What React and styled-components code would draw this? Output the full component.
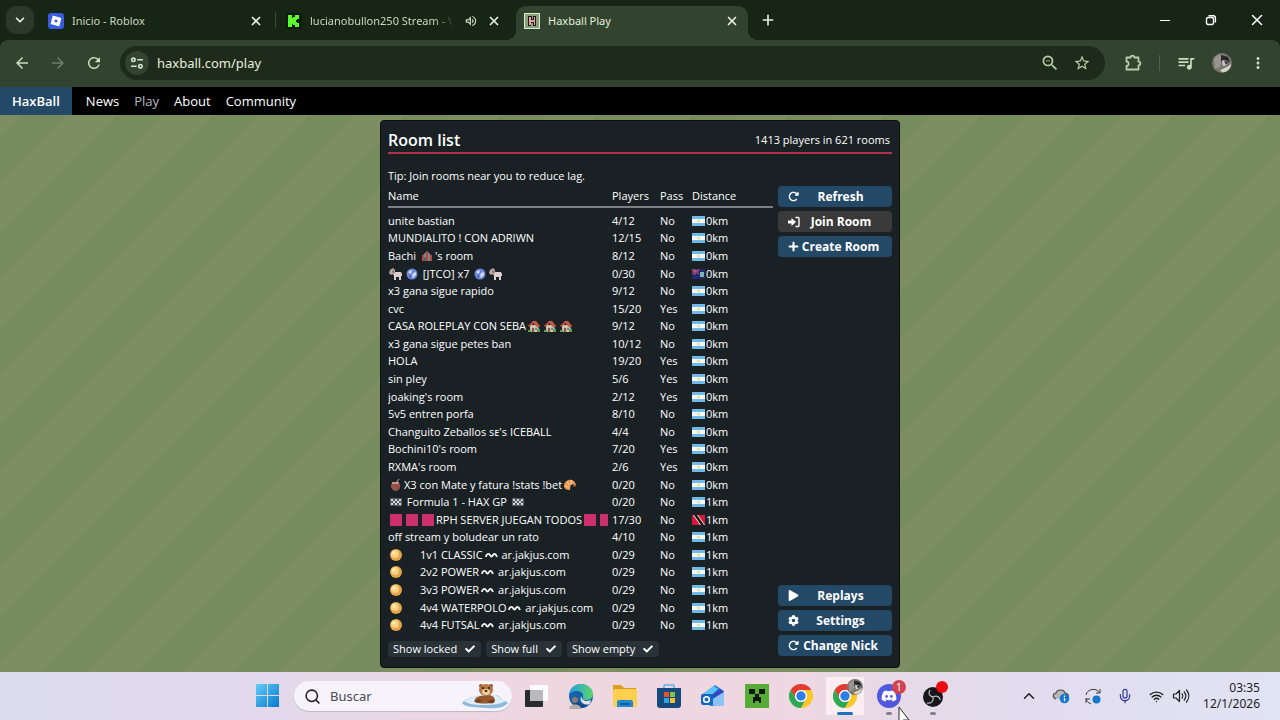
import styled, { createGlobalStyle, css } from 'styled-components';
import {
  MdArrowBack,
  MdArrowForward,
  MdMoreVert,
  MdOutlineVolumeUp,
  MdQueueMusic,
  MdRefresh,
  MdStarBorder,
  MdZoomOut,
} from 'react-icons/md';
import { FaCheck, FaCog, FaDiscord, FaPlay, FaPlus } from 'react-icons/fa';
import { FaRotateRight } from 'react-icons/fa6';
import { ChevronDown, ChevronUp, Mic, Plus, Search, Wifi, X } from 'lucide-react';

const GlobalStyle = createGlobalStyle`
  * {
    box-sizing: border-box;
  }
  body {
    margin: 0;
    font-family: 'Open Sans', 'Noto Sans', sans-serif;
    background: #172514;
  }
  button, input {
    font: inherit;
    color: inherit;
    border: 0;
    padding: 0;
    background: none;
    outline: none;
  }
  a {
    color: inherit;
    text-decoration: none;
  }
  svg {
    display: block;
    flex: none;
  }
`;

// Room data

const rooms = [
  { name: 'unite bastian', players: '4/12', pass: 'No', distance: '0km' },
  { name: 'MUNDIALITO ! CON ADRIWN', players: '12/15', pass: 'No', distance: '0km' },
  { name: 'Bachi :tent:\'s room', players: '8/12', pass: 'No', distance: '0km' },
  { name: ':ram::globe: [JTCO] x7 :globe::ram:', players: '0/30', pass: 'No', distance: '0km', flag: 'fk' },
  { name: 'x3 gana sigue rapido', players: '9/12', pass: 'No', distance: '0km' },
  { name: 'cvc', players: '15/20', pass: 'Yes', distance: '0km' },
  { name: 'CASA ROLEPLAY CON SEBA:house::house::house:', players: '9/12', pass: 'No', distance: '0km' },
  { name: 'x3 gana sigue petes ban', players: '10/12', pass: 'No', distance: '0km' },
  { name: 'HOLA', players: '19/20', pass: 'Yes', distance: '0km' },
  { name: 'sin pley', players: '5/6', pass: 'Yes', distance: '0km' },
  { name: 'joaking\'s room', players: '2/12', pass: 'Yes', distance: '0km' },
  { name: '5v5 entren porfa', players: '8/10', pass: 'No', distance: '0km' },
  { name: 'Changuito Zeballos sᴇ\'s ICEBALL', players: '4/4', pass: 'No', distance: '0km' },
  { name: 'Bochini10\'s room', players: '7/20', pass: 'Yes', distance: '0km' },
  { name: 'RXMA\'s room', players: '2/6', pass: 'Yes', distance: '0km' },
  { name: ':mate:X3 con Mate y fatura !stats !bet:croissant:', players: '0/20', pass: 'No', distance: '0km' },
  { name: ':flag: Formula 1 - HAX GP :flag:', players: '0/20', pass: 'No', distance: '1km' },
  { name: ':square::square::square:RPH SERVER JUEGAN TODOS:square::square:', players: '17/30', pass: 'No', distance: '1km', flag: 'tt' },
  { name: 'off stream y boludear un rato', players: '4/10', pass: 'No', distance: '1km' },
  { name: ':ball::blank:1v1 CLASSIC:wave: ar.jakjus.com', players: '0/29', pass: 'No', distance: '1km' },
  { name: ':ball::blank:2v2 POWER:wave: ar.jakjus.com', players: '0/29', pass: 'No', distance: '1km' },
  { name: ':ball::blank:3v3 POWER:wave: ar.jakjus.com', players: '0/29', pass: 'No', distance: '1km' },
  { name: ':ball::blank:4v4 WATERPOLO:wave: ar.jakjus.com', players: '0/29', pass: 'No', distance: '1km' },
  { name: ':ball::blank:4v4 FUTSAL:wave: ar.jakjus.com', players: '0/29', pass: 'No', distance: '1km' },
];

// Emoji drawings, all on a 16x12 box

const emojis = {
  tent: (
    <>
      <path d='M3 6 8 1l5 5v5H3z' fill='#7c8890' />
      <path d='M3 5h2v6H3zM7 2h2v9H7zM11 5h2v6h-2z' fill='#b8453f' />
      <path d='M5 7h2v4H5z' fill='#3f6e72' />
    </>
  ),
  ram: (
    <>
      <path d='M6 4h7l1 2v2h-1v4h-2V9H8v3H6V8L5 6z' fill='#ddcfd0' />
      <path d='M2 2l3-2 2 2v4H5L3 7 1 5z' fill='#bfa7a3' />
      <path d='M4 2l2 1v2H5z' fill='#7b625e' />
    </>
  ),
  globe: (
    <>
      <circle cx='8' cy='6' r='5.5' fill='#6f86dd' />
      <path d='M4 4l3-2 1 2-2 2zM9 5l3-1v3L9 10 8 8z' fill='#cfdcf7' />
      <path d='M5 7l2 1v2z' fill='#2c3f97' />
    </>
  ),
  house: (
    <>
      <path d='M4 5h9v7H4z' fill='#c9c3b4' />
      <path d='M2 6 7 1h3l4 5-1 1-5-4-5 4z' fill='#d4523d' />
      <path d='M9 2l4 5v2L8 4z' fill='#b9653f' />
      <path d='M6 8h2v4H6z' fill='#8a4d3c' />
      <path d='M2 10h3v2H2zM11 9h3v3h-3z' fill='#5f9c45' />
      <path d='M9 8h2v2H9z' fill='#5b8fb5' />
    </>
  ),
  mate: (
    <>
      <path d='M3 5h9c1 3-1 7-4 7S2 9 3 5z' fill='#94504b' />
      <path d='M4 3h7v2H4z' fill='#c58f86' />
      <path d='M8 4l3-4' stroke='#b8b0ae' />
    </>
  ),
  croissant: (
    <>
      <path d='M2 7C2 3 6 0 10 1c3 1 4 4 4 6l-3-2c-2 0-3 2-3 6-3 0-6-1-6-4z' fill='#e89a56' />
      <path d='M5 3l3 3M9 1l1 4M3 7l4 1' stroke='#fbd4a4' />
      <path d='M10 5l4 2-2 1z' fill='#a85a2a' />
    </>
  ),
  flag: (
    <>
      <path d='M2 2c3-1 5 1 12 0v8c-5 1-8-1-12 0z' fill='#555b62' />
      <path d='M3 3h2v2H3zM7 3h2v2H7zM11 3h2v2h-2zM5 5h2v2H5zM9 5h2v2H9zM3 7h2v2H3zM7 7h2v2H7zM11 7h2v2h-2z' fill='#d4d7dd' />
    </>
  ),
  square: <path d='M2 0h12v12H2z' fill='#cc2f69' />,
  ball: (
    <>
      <circle cx='8' cy='6' r='6' fill='#e3a44a' />
      <circle cx='7' cy='5' r='4' fill='#f8cf7c' />
      <circle cx='6' cy='4' r='2' fill='#fde6ab' />
    </>
  ),
  wave: (
    <path d='M3 8c0-3 3-4 4-2s2 2 3 0 3-1 4 2' fill='none' stroke='#f2f2f2' strokeWidth='1.8' />
  ),
  blank: null,
};

const RoomName = ({ text }) =>
  text.split(/(:[a-z]+:)/).map((part, i) =>
    /^:[a-z]+:$/.test(part) ? (
      <Emoji key={i} viewBox='0 0 16 12' aria-hidden='true'>
        {emojis[part.slice(1, -1)]}
      </Emoji>
    ) : (
      part
    ),
  );

const CountryFlag = ({ code }) => (
  <FlagSvg viewBox='0 0 13 10' aria-hidden='true'>
    {code === 'fk' && (
      <>
        <path d='M0 0h13v10H0z' fill='#26296e' />
        <path d='M0 0l7 5M7 0 0 5M3 0v6M0 2h7' stroke='#c9547d' />
        <path d='M8 3h4v5H8z' fill='#7bb5b0' />
      </>
    )}
    {code === 'tt' && (
      <>
        <path d='M0 0h13v10H0z' fill='#d8163a' />
        <path d='M1 0h5l7 10H8z' fill='#f0e6e6' />
        <path d='M2 0h3l7 10H9z' fill='#161616' />
      </>
    )}
    {code === 'ar' && (
      <>
        <path d='M0 0h13v10H0z' fill='#6fb9e6' />
        <path d='M0 3h13v4H0z' fill='#f4f8f8' />
        <circle cx='6.5' cy='5' r='1.5' fill='#ecdc9a' />
      </>
    )}
  </FlagSvg>
);

// Icons

const RobloxIcon = () => (
  <svg width='16' height='16' viewBox='0 0 16 16'>
    <rect width='16' height='16' rx='3' fill='#3a5be0' />
    <path fillRule='evenodd' d='M4.8 2.6 13.4 4.9 11.2 13.4 2.6 11.1zM7 6.4 6.4 8.9 9 9.6 9.6 7.1z' fill='#fff' />
  </svg>
);

const KickIcon = () => (
  <svg width='16' height='16' viewBox='0 0 16 16'>
    <rect width='16' height='16' rx='2' fill='#0c1a0a' />
    <path d='M2 2h4v3h1V4h2V2h4v4h-2v1h-1v2h1v1h2v4H9v-2H7v-1H6v3H2z' fill='#5cfb2d' />
  </svg>
);

const HaxballIcon = () => (
  <svg width='16' height='16' viewBox='0 0 16 16'>
    <rect x='0.5' y='0.5' width='15' height='15' fill='#86a278' stroke='#dfe9d4' />
    <path d='M4 3h4v3h1V3h3v10H9v-3H7v3H4z' fill='#1d1416' />
    <path d='M5 4h2v3h3V4h1v8h-1V9H7v3H5z' fill='#e3a3a3' />
  </svg>
);

const SiteInfoIcon = () => (
  <svg width='14' height='14' viewBox='0 0 14 14' fill='none' stroke='#d5e5cc' strokeWidth='1.6'>
    <circle cx='3.4' cy='3.8' r='1.7' />
    <path d='M7.2 3.8H13M1 10.2h5.6' />
    <circle cx='10.4' cy='10.2' r='1.7' />
  </svg>
);

const ExtensionIcon = () => (
  <svg width='18' height='18' viewBox='0 0 18 18' fill='none' stroke='#b5cda8' strokeWidth='1.8' strokeLinejoin='round'>
    <path d='M2.5 3.5h4.2c0-2.4 3.6-2.4 3.6 0h4.2v4.2c2.4 0 2.4 3.6 0 3.6v4.2h-12v-3.6c2.8 0 2.8-4.4 0-4.4z' />
  </svg>
);

const AvatarIcon = ({ size }) => (
  <svg width={size} height={size} viewBox='0 0 20 20'>
    <circle cx='10' cy='10' r='10' fill='#77756f' />
    <path d='M2 5l6-4 3 5-3 8-5 2z' fill='#99938d' />
    <path d='M9 2l7 2 2 5-5-2-4 2z' fill='#24262a' />
    <path d='M10 7l4 1 1 4-4 1z' fill='#cfcbd0' />
    <path d='M12 8l4 1-2 3z' fill='#2c2d33' />
    <path d='M8 17l7-3 4-3c0 5-5 9-9 8z' fill='#d8d3c4' />
  </svg>
);

const RestoreIcon = () => (
  <svg width='12' height='12' viewBox='0 0 12 12' fill='none' stroke='#fff' strokeWidth='1.4'>
    <rect x='1.5' y='3.5' width='7' height='7' rx='1.5' />
    <path d='M3.5 1.8h4.7c1.3 0 2.2 1 2.2 2.2v4.5' />
  </svg>
);

const LoginIcon = () => (
  <svg width='12' height='12' viewBox='0 0 12 12'>
    <path d='M0 4.5h3.5V2L8 6l-4.5 4V7.5H0z' fill='#fff' />
    <path d='M7.5 1.5H10c.6 0 1 .4 1 1v7c0 .6-.4 1-1 1H7.5' fill='none' stroke='#fff' strokeWidth='1.4' />
  </svg>
);

const WindowsIcon = () => (
  <svg width='24' height='24' viewBox='0 0 24 24'>
    <defs>
      <linearGradient id='win' x1='0' y1='0' x2='1' y2='1'>
        <stop offset='0' stopColor='#5fcdf5' />
        <stop offset='1' stopColor='#0a78cf' />
      </linearGradient>
    </defs>
    <path d='M1 0h11v11H1zM13 0h11v11H13zM1 12h11v11H1zM13 12h11v11H13z' fill='url(#win)' />
  </svg>
);

const OtterIcon = () => (
  <svg width='48' height='26' viewBox='0 0 48 26'>
    <path d='M1 20c3-4 9-6 15-7l20-1c3 3 9 6 11 8-4 5-14 6-22 5S4 25 1 20z' fill='#8fb9dc' />
    <path d='M3 18c4-3 10-5 14-5l18-1c3 3 8 4 10 6-6 3-12 4-20 4S8 22 3 18z' fill='#deedf8' />
    <path d='M14 19c-1-4 2-5 5-6l9-1c5 1 7 4 5 7-5 2-14 2-19 0z' fill='#96592f' />
    <path d='M13 18c3-2 6-2 8 0-2 2-6 2-8 0zM27 19c2-3 5-3 7-1-1 3-5 3-7 1z' fill='#743f20' />
    <circle cx='20' cy='3' r='2' fill='#8c5530' />
    <circle cx='30' cy='3' r='2' fill='#8c5530' />
    <ellipse cx='25' cy='7' rx='7' ry='6' fill='#b9773f' />
    <ellipse cx='25' cy='9' rx='4' ry='3' fill='#edcfa5' />
    <circle cx='22' cy='5' r='1' fill='#2a1a12' />
    <circle cx='28' cy='5' r='1' fill='#2a1a12' />
    <ellipse cx='25' cy='8' rx='1.5' ry='1' fill='#2a1a12' />
  </svg>
);

const TaskViewIcon = () => (
  <svg width='24' height='24' viewBox='0 0 24 24'>
    <rect x='5' y='1' width='18' height='16' rx='1' fill='#fbfafc' />
    <rect x='0' y='6' width='18' height='17' rx='1' fill='#2a2b2e' />
    <path d='M5 6h13v11H5z' fill='#b9b8bb' />
  </svg>
);

const EdgeIcon = () => (
  <svg width='26' height='26' viewBox='0 0 26 26'>
    <defs>
      <linearGradient id='edge' x1='0' y1='0' x2='1' y2='0'>
        <stop offset='0' stopColor='#1d9fe0' />
        <stop offset='1' stopColor='#5fd66b' />
      </linearGradient>
    </defs>
    <circle cx='13' cy='13' r='12' fill='#1461ae' />
    <path d='M1 12C2 5 7 1 13 1c7 0 12 5 12 10 0 4-3 6-7 6-3 0-4-1-3-3 1-4-3-6-6-6-4 0-7 2-8 4z' fill='url(#edge)' />
    <path d='M9 13c-1 6 5 10 12 8-3 4-9 5-13 3-4-3-4-9 1-11z' fill='#0d4c8f' />
    <path d='M13 13c1 5 5 6 10 4l-1 4c-5 2-11-1-9-8z' fill='#ecdce4' />
    <circle cx='7' cy='17' r='3' fill='#8a7a72' />
    <path d='M1 26c0-6 12-6 12 0z' fill='#b8aaa4' />
  </svg>
);

const ExplorerIcon = () => (
  <svg width='26' height='24' viewBox='0 0 26 24'>
    <path d='M1 2c0-1 1-1 1-1h7l3 3h12v6H1z' fill='#dc9d1c' />
    <rect x='1' y='5' width='24' height='18' rx='2' fill='#fccf4f' />
    <path d='M5 23v-5c0-1 1-2 2-2h12c1 0 2 1 2 2v5z' fill='#2388cf' />
    <path d='M8 19h10v2H8z' fill='#0f5d9f' />
  </svg>
);

const StoreIcon = () => (
  <svg width='24' height='24' viewBox='0 0 24 24'>
    <path d='M7 4V2c0-1 1-1 1-1h8c1 0 1 1 1 1v2' fill='none' stroke='#52b8e4' strokeWidth='1.6' />
    <path d='M0 4h24v17c0 2-1 3-3 3H3c-2 0-3-1-3-3z' fill='#17497c' />
    <path d='M7 8h5v5H7z' fill='#e8512e' />
    <path d='M13 8h5v5h-5z' fill='#86c43c' />
    <path d='M7 14h5v5H7z' fill='#29a5e8' />
    <path d='M13 14h5v5h-5z' fill='#fbc02d' />
  </svg>
);

const OutlookIcon = () => (
  <svg width='26' height='24' viewBox='0 0 26 24'>
    <path d='M3 10 15 1l9 6v12c0 2-1 3-3 3H10z' fill='#2a7de0' />
    <path d='M3 10 14 2l4 3-10 9z' fill='#5cc5f7' />
    <path d='M24 7 10 17l4 5h8c1 0 2-1 2-3z' fill='#8cc4fa' />
    <path d='M24 8 12 15l-3-2 11-8z' fill='#3346c2' />
    <rect x='1' y='10' width='12' height='11' rx='2' fill='#1566c0' />
    <circle cx='6.5' cy='15.5' r='2.8' fill='none' stroke='#fff' strokeWidth='1.6' />
  </svg>
);

const CreeperIcon = () => (
  <svg width='24' height='24' viewBox='0 0 24 24'>
    <path d='M0 0h24v24H0z' fill='#55ad36' />
    <path d='M4 5h6v5H4zM14 5h6v5h-6zM10 10h4v3h2v6h-2v-2h-4v2H8v-6h2z' fill='#10180d' />
  </svg>
);

const ChromeIcon = () => (
  <svg width='24' height='24' viewBox='0 0 48 48'>
    <path d='M44.8 12A24 24 0 0 0 3.2 12L13.6 30A12 12 0 0 1 24 12z' fill='#e33b2e' />
    <path d='M3.2 12A24 24 0 0 0 24 48L34.4 30A12 12 0 0 1 13.6 30z' fill='#2da94f' />
    <path d='M24 48A24 24 0 0 0 44.8 12H24A12 12 0 0 1 34.4 30z' fill='#fcc624' />
    <circle cx='24' cy='24' r='12' fill='#fff' />
    <circle cx='24' cy='24' r='9.4' fill='#2f7de9' />
  </svg>
);

const DiscordIcon = () => (
  <DiscordCircle>
    <FaDiscord size={16} />
  </DiscordCircle>
);

const ObsIcon = () => (
  <svg width='24' height='24' viewBox='0 0 24 24'>
    <circle cx='12' cy='13' r='10' fill='#17171a' />
    <g fill='none' stroke='#b9b6bd' strokeWidth='1.3'>
      <path d='M12 13c-4-1-5-4-3-7M12 13c4-2 7 0 7 3M12 13c1 4-2 7-6 6' />
    </g>
  </svg>
);

const CloudInfoIcon = () => (
  <svg width='18' height='18' viewBox='0 0 18 18'>
    <path d='M4 12C0 11 1 6 4 6c1-4 8-4 9 0 3 0 4 3 3 5' fill='#b9b7b5' stroke='#4a4a4c' strokeWidth='1.2' />
    <circle cx='12.5' cy='11.5' r='4.8' fill='#1478cc' />
    <path d='M12.5 10.8v3.4M12.5 8.5v1.4' stroke='#fff' strokeWidth='1.3' />
  </svg>
);

const SyncIcon = () => (
  <svg width='18' height='18' viewBox='0 0 18 18'>
    <path d='M2 8c1-6 10-8 14-2M16 2v4h-4M2 11c0 2 2 5 5 6M2 16v-4h4' fill='none' stroke='#3a3a40' />
    <circle cx='12.5' cy='12.5' r='4' fill='#1478cc' />
  </svg>
);

const SpeakerIcon = () => (
  <svg width='18' height='16' viewBox='0 0 18 16' fill='none' stroke='#1d1d22' strokeWidth='1.2' strokeLinecap='round'>
    <path d='M1.5 6H4l3.5-3.5v11L4 10H1.5z' strokeLinejoin='round' />
    <path d='M10 6c1 1 1 3 0 4M12.2 4c2 2.4 2 5.6 0 8M14.5 2c3 3.6 3 8.4 0 12' />
  </svg>
);

const CursorIcon = () => (
  <Cursor viewBox='0 0 12 14' aria-hidden='true'>
    <path d='M1 1v17l4-4h6z' fill='#fff' stroke='#2a2a2a' />
  </Cursor>
);

const App = () => {
  return (
    <>
      <GlobalStyle />
      <Page>
        <TabStrip>
          <TabSearchButton aria-label='Buscar pestañas'>
            <ChevronDown size={14} strokeWidth={3} />
          </TabSearchButton>
          <Tab>
            <RobloxIcon />
            <TabTitle>Inicio - Roblox</TabTitle>
            <TabClose aria-label='Cerrar'>
              <X size={14} strokeWidth={3} />
            </TabClose>
            <TabDivider />
          </Tab>
          <Tab>
            <KickIcon />
            <TabTitle $fade>lucianobullon250 Stream - \</TabTitle>
            <MdOutlineVolumeUp size={14} />
            <TabClose aria-label='Cerrar'>
              <X size={14} strokeWidth={3} />
            </TabClose>
          </Tab>
          <Tab $active>
            <HaxballIcon />
            <TabTitle>Haxball Play</TabTitle>
            <TabClose aria-label='Cerrar'>
              <X size={14} strokeWidth={3} />
            </TabClose>
          </Tab>
          <NewTabButton aria-label='Nueva pestaña'>
            <Plus size={16} strokeWidth={2.5} />
          </NewTabButton>
          <WindowControls>
            <WindowButton aria-label='Minimizar'>
              <MinimizeBar />
            </WindowButton>
            <WindowButton aria-label='Restaurar'>
              <RestoreIcon />
            </WindowButton>
            <WindowButton aria-label='Cerrar ventana'>
              <X size={18} strokeWidth={2} />
            </WindowButton>
          </WindowControls>
        </TabStrip>

        <Toolbar>
          <ToolButton aria-label='Atrás'>
            <MdArrowBack size={18} />
          </ToolButton>
          <ToolButton aria-label='Adelante' $dim>
            <MdArrowForward size={18} />
          </ToolButton>
          <ToolButton aria-label='Recargar'>
            <MdRefresh size={18} />
          </ToolButton>
          <Omnibox>
            <SiteInfoButton aria-label='Información del sitio'>
              <SiteInfoIcon />
            </SiteInfoButton>
            <UrlInput aria-label='Dirección' defaultValue='haxball.com/play' />
            <OmniboxButton aria-label='Zoom'>
              <MdZoomOut size={20} />
            </OmniboxButton>
            <OmniboxButton aria-label='Favorito'>
              <MdStarBorder size={18} />
            </OmniboxButton>
          </Omnibox>
          <ToolbarRight>
            <ToolButton aria-label='Extensiones'>
              <ExtensionIcon />
            </ToolButton>
            <ToolDivider />
            <ToolButton aria-label='Multimedia'>
              <MdQueueMusic size={20} />
            </ToolButton>
            <ToolButton aria-label='Perfil'>
              <AvatarIcon size={20} />
            </ToolButton>
            <ToolButton aria-label='Menú'>
              <MdMoreVert size={18} />
            </ToolButton>
          </ToolbarRight>
        </Toolbar>

        <SiteHeader>
          <Brand href='#'>HaxBall</Brand>
          <SiteNav>
            <NavLink href='#'>News</NavLink>
            <NavLink href='#' $current>Play</NavLink>
            <NavLink href='#'>About</NavLink>
            <NavLink href='#'>Community</NavLink>
          </SiteNav>
        </SiteHeader>

        <Field>
          <RoomPanel>
            <PanelHeader>
              <PanelTitle>Room list</PanelTitle>
              <PanelCount>1413 players in 621 rooms</PanelCount>
            </PanelHeader>
            <Tip>Tip: Join rooms near you to reduce lag.</Tip>
            <PanelBody>
              <ListColumn>
                <RoomTable>
                  <RoomHead>
                    <RoomRow>
                      <HeadCell>Name</HeadCell>
                      <HeadCell>Players</HeadCell>
                      <HeadCell>Pass</HeadCell>
                      <HeadCell>Distance</HeadCell>
                    </RoomRow>
                  </RoomHead>
                  <RoomBody>
                    {rooms.map((room) => (
                      <RoomRow key={room.name}>
                        <NameCell>
                          <RoomName text={room.name} />
                        </NameCell>
                        <Cell>{room.players}</Cell>
                        <Cell>{room.pass}</Cell>
                        <DistanceCell>
                          <CountryFlag code={room.flag || 'ar'} />
                          {room.distance}
                        </DistanceCell>
                      </RoomRow>
                    ))}
                  </RoomBody>
                </RoomTable>
                <Filters>
                  {['Show locked', 'Show full', 'Show empty'].map((label) => (
                    <Filter key={label}>
                      {label}
                      <FilterBox>
                        <FilterInput type='checkbox' defaultChecked />
                        <FilterCheck size={10} />
                      </FilterBox>
                    </Filter>
                  ))}
                </Filters>
              </ListColumn>
              <ButtonColumn>
                <PanelButton>
                  <FaRotateRight size={11} />
                  <PanelButtonText>Refresh</PanelButtonText>
                </PanelButton>
                <PanelButton $disabled>
                  <LoginIcon />
                  <PanelButtonText>Join Room</PanelButtonText>
                </PanelButton>
                <PanelButton>
                  <FaPlus size={11} />
                  <PanelButtonText>Create Room</PanelButtonText>
                </PanelButton>
                <ButtonSpacer />
                <PanelButton>
                  <FaPlay size={11} />
                  <PanelButtonText>Replays</PanelButtonText>
                </PanelButton>
                <PanelButton>
                  <FaCog size={11} />
                  <PanelButtonText>Settings</PanelButtonText>
                </PanelButton>
                <PanelButton>
                  <FaRotateRight size={11} />
                  <PanelButtonText>Change Nick</PanelButtonText>
                </PanelButton>
              </ButtonColumn>
            </PanelBody>
          </RoomPanel>
        </Field>

        <Taskbar>
          <TaskItems>
            <TaskButton aria-label='Inicio'>
              <WindowsIcon />
            </TaskButton>
            <TaskSearch>
              <Search size={17} strokeWidth={2.2} />
              <TaskSearchInput placeholder='Buscar' aria-label='Buscar' />
              <OtterIcon />
            </TaskSearch>
            <TaskButton aria-label='Vista de tareas'>
              <TaskViewIcon />
            </TaskButton>
            <TaskButton aria-label='Edge'>
              <EdgeIcon />
            </TaskButton>
            <TaskButton aria-label='Explorador'>
              <ExplorerIcon />
            </TaskButton>
            <TaskButton aria-label='Store'>
              <StoreIcon />
            </TaskButton>
            <TaskButton aria-label='Outlook'>
              <OutlookIcon />
            </TaskButton>
            <TaskButton aria-label='Minecraft'>
              <CreeperIcon />
            </TaskButton>
            <TaskButton aria-label='Chrome'>
              <ChromeIcon />
            </TaskButton>
            <TaskButton aria-label='Chrome, Haxball Play' $state='active'>
              <ChromeIcon />
              <AvatarBadge>
                <AvatarIcon size={16} />
              </AvatarBadge>
            </TaskButton>
            <TaskButton aria-label='Discord' $state='open'>
              <DiscordIcon />
              <CountBadge>1</CountBadge>
              <CursorIcon />
            </TaskButton>
            <TaskButton aria-label='OBS' $state='open'>
              <ObsIcon />
              <RecordBadge />
            </TaskButton>
          </TaskItems>
          <Tray>
            <TrayButton aria-label='Iconos ocultos'>
              <ChevronUp size={18} strokeWidth={2} />
            </TrayButton>
            <TrayButton aria-label='OneDrive'>
              <CloudInfoIcon />
            </TrayButton>
            <TrayButton aria-label='Actualización'>
              <SyncIcon />
            </TrayButton>
            <TrayButton aria-label='Micrófono'>
              <Mic size={16} strokeWidth={1.8} color='#2a3596' />
            </TrayButton>
            <TrayNetwork aria-label='Red y volumen'>
              <Wifi size={15} strokeWidth={2.2} />
              <SpeakerIcon />
            </TrayNetwork>
            <Clock>
              <span>03:35</span>
              <span>12/1/2026</span>
            </Clock>
          </Tray>
        </Taskbar>
      </Page>
    </>
  );
};

export default App;

export const Page = styled.div`
  min-height: 100vh;
  display: flex;
  flex-direction: column;
  overflow: hidden;
`;

// Browser

export const TabStrip = styled.div`
  height: 40px;
  display: flex;
  align-items: flex-end;
  gap: 6px;
  padding-left: 6px;
  background: #172514;
  color: #e3efdc;
`;

export const TabSearchButton = styled.button`
  width: 28px;
  height: 28px;
  margin-bottom: 6px;
  border-radius: 10px;
  display: flex;
  align-items: center;
  justify-content: center;
  background: #2a3928;
`;

export const Tab = styled.div`
  position: relative;
  flex: 0 1 232px;
  min-width: 0;
  height: 34px;
  padding: 0 8px 5px;
  display: flex;
  align-items: center;
  gap: 8px;
  color: #c9d8c0;
  ${(props) =>
    props.$active &&
    css`
      background: #32432f;
      border-radius: 10px 10px 0 0;
      color: #e3efdc;
      &::before,
      &::after {
        content: '';
        position: absolute;
        bottom: 0;
        width: 10px;
        height: 10px;
      }
      &::before {
        left: -10px;
        background: radial-gradient(circle at 0 0, transparent 10px, #32432f 10px);
      }
      &::after {
        right: -10px;
        background: radial-gradient(circle at 100% 0, transparent 10px, #32432f 10px);
      }
    `}
`;

export const TabTitle = styled.span`
  flex: 1;
  min-width: 0;
  overflow: hidden;
  white-space: nowrap;
  font-family: 'Noto Sans', sans-serif;
  font-size: 11px;
  line-height: 16px;
  ${(props) =>
    props.$fade &&
    css`
      mask-image: linear-gradient(to right, #000 85%, transparent);
    `}
`;

export const TabClose = styled.button`
  width: 16px;
  height: 16px;
  display: flex;
  align-items: center;
  justify-content: center;
  color: #e3efdc;
`;

export const TabDivider = styled.span`
  position: absolute;
  right: -4px;
  top: 6px;
  width: 1px;
  height: 16px;
  background: #3d4d39;
`;

export const NewTabButton = styled.button`
  width: 28px;
  height: 28px;
  margin-bottom: 6px;
  display: flex;
  align-items: center;
  justify-content: center;
`;

export const WindowControls = styled.div`
  margin-left: auto;
  height: 40px;
  display: flex;
`;

export const WindowButton = styled.button`
  width: 46px;
  display: flex;
  align-items: center;
  justify-content: center;
  color: #ffffff;
`;

export const MinimizeBar = styled.span`
  width: 10px;
  height: 1px;
  background: #ffffff;
`;

export const Toolbar = styled.div`
  height: 47px;
  padding: 0 4px 1px;
  display: flex;
  align-items: center;
  border-radius: 8px 8px 0 0;
  background: #32432f;
  color: #b5cda8;
`;

export const ToolButton = styled.button`
  width: 36px;
  height: 34px;
  display: flex;
  align-items: center;
  justify-content: center;
  color: ${(props) => (props.$dim ? '#6d7f66' : '#c9dcbf')};
`;

export const Omnibox = styled.div`
  flex: 1;
  min-width: 0;
  height: 34px;
  margin-left: 8px;
  padding: 0 7px 0 5px;
  display: flex;
  align-items: center;
  border-radius: 17px;
  background: #1e2b1b;
`;

export const SiteInfoButton = styled.button`
  width: 24px;
  height: 24px;
  border-radius: 50%;
  display: flex;
  align-items: center;
  justify-content: center;
  background: #32432f;
`;

export const UrlInput = styled.input`
  flex: 1;
  min-width: 0;
  margin-left: 8px;
  font-family: 'Noto Sans', sans-serif;
  font-size: 13px;
  line-height: 20px;
  color: #e6eedf;
`;

export const OmniboxButton = styled.button`
  width: 32px;
  height: 32px;
  display: flex;
  align-items: center;
  justify-content: center;
`;

export const ToolbarRight = styled.div`
  margin-left: 10px;
  display: flex;
  align-items: center;
`;

export const ToolDivider = styled.span`
  width: 1px;
  height: 16px;
  margin: 0 8px;
  background: #50644b;
`;

// Site header

export const SiteHeader = styled.header`
  height: 28px;
  display: flex;
  background: #000000;
  color: #ffffff;
  font-size: 13px;
  line-height: 28px;
`;

export const Brand = styled.a`
  padding: 0 12px;
  font-weight: 600;
  background: #244967;
`;

export const SiteNav = styled.nav`
  padding-left: 14px;
  display: flex;
  gap: 15px;
`;

export const NavLink = styled.a`
  font-weight: ${(props) => (props.$current ? 400 : 500)};
  color: ${(props) => (props.$current ? '#b4b8c4' : '#ffffff')};
`;

// Room list

export const Field = styled.main`
  flex: 1;
  display: flex;
  justify-content: center;
  padding: 5px 0 4px;
  background: linear-gradient(
      135deg,
      #7d8f62 11%,
      #768c5e 11%,
      #768c5e 35%,
      #7d8f62 35%,
      #7d8f62 61%,
      #768c5e 61%,
      #768c5e 85%,
      #7d8f62 85%
    )
    0 0 / 96px 96px;
`;

export const RoomPanel = styled.section`
  width: 520px;
  max-width: 100%;
  padding: 7px 7px 10px;
  display: flex;
  flex-direction: column;
  border: 1px solid #0c1012;
  border-radius: 4px;
  background: #1a2125;
  color: #ffffff;
  font-size: 11px;
  line-height: 16px;
`;

export const PanelHeader = styled.div`
  height: 26px;
  padding-right: 2px;
  display: flex;
  align-items: center;
  justify-content: space-between;
  border-bottom: 2px solid #b2304a;
`;

export const PanelTitle = styled.h1`
  margin: 0;
  font-size: 16px;
  line-height: 24px;
  font-weight: 600;
`;

export const PanelCount = styled.span`
  line-height: 24px;
`;

export const Tip = styled.p`
  margin: 11px 0 0;
  line-height: 21px;
`;

export const PanelBody = styled.div`
  flex: 1;
  display: flex;
  gap: 5px;
`;

export const ListColumn = styled.div`
  flex: 1;
  min-width: 0;
  display: flex;
  flex-direction: column;
`;

export const RoomTable = styled.table`
  flex: 1;
  display: flex;
  flex-direction: column;
  gap: 4px;
`;

export const RoomHead = styled.thead`
  display: block;
  border-bottom: 2px solid #7d8082;
`;

export const RoomBody = styled.tbody`
  flex: 1;
  display: grid;
  grid-auto-rows: 1fr;
`;

export const RoomRow = styled.tr`
  display: grid;
  grid-template-columns: 224px 48px 32px 1fr;
  align-items: center;
`;

export const HeadCell = styled.th`
  padding: 0;
  text-align: left;
  font-weight: 400;
  line-height: 20px;
`;

export const Cell = styled.td`
  padding: 0;
  white-space: nowrap;
`;

export const NameCell = styled(Cell)`
  margin-right: 4px;
  overflow: hidden;
`;

export const DistanceCell = styled(Cell)`
  display: flex;
  align-items: center;
  gap: 1px;
`;

export const Emoji = styled.svg`
  display: inline-block;
  width: 16px;
  height: 12px;
  vertical-align: -2px;
`;

export const FlagSvg = styled.svg`
  width: 13px;
  height: 10px;
`;

export const Filters = styled.div`
  margin-top: 7px;
  display: flex;
  gap: 5px;
`;

export const Filter = styled.label`
  height: 16px;
  padding: 0 6px 0 5px;
  display: flex;
  align-items: center;
  gap: 8px;
  border-radius: 4px;
  background: #293237;
`;

export const FilterBox = styled.span`
  display: grid;
  place-items: center;
`;

export const FilterInput = styled.input`
  grid-area: 1 / 1;
  appearance: none;
  width: 10px;
  height: 10px;
  margin: 0;
`;

export const FilterCheck = styled(FaCheck)`
  grid-area: 1 / 1;
  pointer-events: none;
`;

export const ButtonColumn = styled.div`
  width: 114px;
  padding-bottom: 1px;
  display: flex;
  flex-direction: column;
  gap: 4px;
`;

export const PanelButton = styled.button`
  height: 21px;
  padding: 0 10px;
  display: flex;
  align-items: center;
  border-radius: 4px;
  font-size: 12px;
  line-height: 20px;
  font-weight: 700;
  background: ${(props) => (props.$disabled ? '#3a3a3b' : '#244967')};
`;

export const PanelButtonText = styled.span`
  flex: 1;
  white-space: nowrap;
  text-align: center;
`;

export const ButtonSpacer = styled.div`
  flex: 1;
`;

// Taskbar

export const Taskbar = styled.footer`
  height: 48px;
  padding: 0 20px 0 245px;
  display: flex;
  align-items: center;
  justify-content: space-between;
  background: linear-gradient(to right, #dddcef, #e2d9ec 20%, #efd7e0 42%, #efd7e1 60%, #e2dced 78%, #e0e3f2);
  color: #1d1d22;
`;

export const TaskItems = styled.div`
  display: flex;
  align-items: center;
`;

export const TaskButton = styled.button`
  position: relative;
  width: 44px;
  height: 48px;
  display: flex;
  align-items: center;
  justify-content: center;
  ${(props) =>
    props.$state === 'active' &&
    css`
      background: linear-gradient(#faeef3, #faeef3) center 5px / 38px 38px no-repeat;
    `}
  ${(props) =>
    props.$state &&
    css`
      &::after {
        content: '';
        position: absolute;
        bottom: 5px;
        left: 50%;
        width: ${props.$state === 'active' ? '16px' : '6px'};
        height: 3px;
        border-radius: 2px;
        transform: translateX(-50%);
        background: ${props.$state === 'active' ? '#1f70bf' : '#85808a'};
      }
    `}
`;

export const TaskSearch = styled.div`
  width: 218px;
  height: 30px;
  margin: 0 3px 0 5px;
  padding: 0 3px 0 10px;
  display: flex;
  align-items: center;
  border-radius: 15px;
  background: #f6f3fa;
  box-shadow: 0 1px 1px #bdb6c6;
`;

export const TaskSearchInput = styled.input`
  flex: 1;
  min-width: 0;
  margin-left: 9px;
  font-family: 'Noto Sans', sans-serif;
  font-size: 13px;
  &::placeholder {
    color: #4b4951;
    opacity: 1;
  }
`;

export const DiscordCircle = styled.span`
  width: 24px;
  height: 24px;
  border-radius: 50%;
  display: flex;
  align-items: center;
  justify-content: center;
  background: #5058dd;
  color: #ffffff;
`;

export const AvatarBadge = styled.span`
  position: absolute;
  top: 7px;
  right: 4px;
`;

export const CountBadge = styled.span`
  position: absolute;
  top: 8px;
  right: 5px;
  width: 14px;
  height: 14px;
  border-radius: 50%;
  font-size: 11px;
  line-height: 14px;
  text-align: center;
  background: #d2444f;
  color: #ffffff;
`;

export const RecordBadge = styled.span`
  position: absolute;
  top: 9px;
  right: 7px;
  width: 12px;
  height: 12px;
  border-radius: 50%;
  background: #ec0b12;
`;

export const Cursor = styled.svg`
  position: absolute;
  left: 31px;
  bottom: 0;
  z-index: 1;
  width: 12px;
  height: 14px;
`;

export const Tray = styled.div`
  display: flex;
  align-items: center;
`;

export const TrayButton = styled.button`
  width: 32px;
  height: 40px;
  display: flex;
  align-items: center;
  justify-content: center;
`;

export const TrayNetwork = styled.button`
  height: 40px;
  padding: 0 8px;
  display: flex;
  align-items: center;
  gap: 8px;
`;

export const Clock = styled.div`
  margin-left: 5px;
  display: flex;
  flex-direction: column;
  align-items: flex-end;
  font-family: 'Noto Sans', sans-serif;
  font-size: 12px;
  line-height: 16px;
`;
